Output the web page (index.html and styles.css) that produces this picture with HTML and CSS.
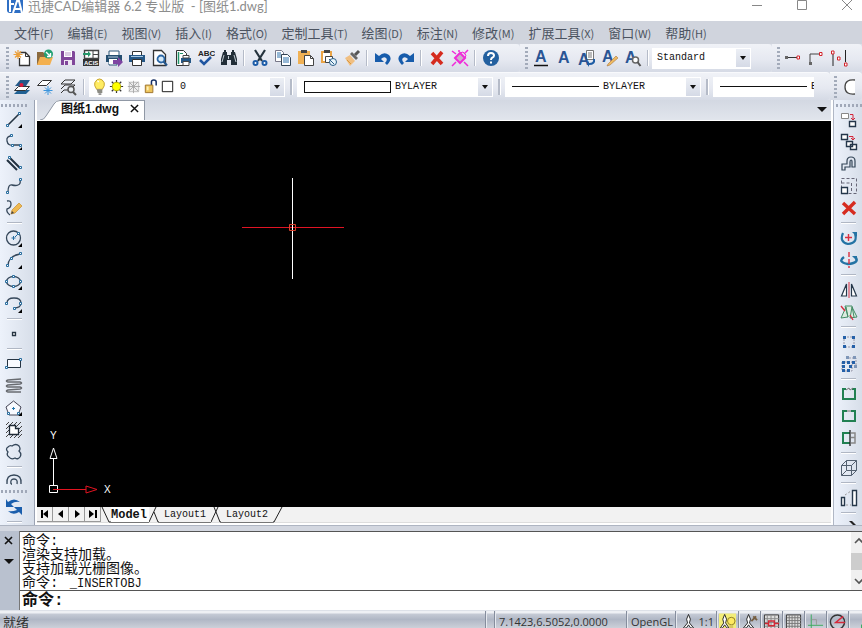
FILE: index.html
```
<!DOCTYPE html>
<html lang="zh-CN">
<head>
<meta charset="utf-8">
<title>迅捷CAD编辑器 6.2 专业版 - [图纸1.dwg]</title>
<link rel="stylesheet" href="styles.css">
</head>
<body>
<header class="titlebar">
  <svg class="logo" viewBox="0 0 18 14"><path d="M1 0h16v10q0 3-3 3H4q-3 0-3-3z" fill="#2f6fc4"/><path d="M4 0v12M4 4h4" stroke="#fff" stroke-width="2"/><path d="M7 13L11 1h2l3 12M9 9h6" stroke="#fff" stroke-width="2" fill="none"/></svg>
  <h1>迅捷CAD编辑器 6.2 专业版 &nbsp;- [图纸1.dwg]</h1>
  <div class="window-buttons">
    <button aria-label="最小化"><svg viewBox="0 0 12 12"><path d="M1 5.500h10"/></svg></button>
    <button aria-label="最大化"><svg viewBox="0 0 12 12"><path d="M1.500 .5h9v9h-9z"/></svg></button>
    <button aria-label="关闭"><svg viewBox="0 0 12 12"><path d="M1 0l10 10M11 0L1 10"/></svg></button>
  </div>
</header>

<nav class="menubar">
  <button>文件<small>(F)</small></button><button>编辑<small>(E)</small></button><button>视图<small>(V)</small></button><button>插入<small>(I)</small></button><button>格式<small>(O)</small></button><button>定制工具<small>(T)</small></button><button>绘图<small>(D)</small></button><button>标注<small>(N)</small></button><button>修改<small>(M)</small></button><button>扩展工具<small>(X)</small></button><button>窗口<small>(W)</small></button><button>帮助<small>(H)</small></button>
</nav>

<div class="toolrow">
  <section class="toolbar standard">
    <i class="grip"></i>
    <button aria-label="新建"><svg viewBox="0 0 18 18"><path d="M6.500 3.500h6l4 4v9h-10V9" fill="#fff" stroke="#333" stroke-width="1.300"/><path d="M12.500 3.500v4h4" fill="none" stroke="#333"/><path d="M5 1v9M.5 5.500h9M2 2.500l6 6M8 2.500l-6 6" stroke="#eba03c" stroke-width="1.200"/></svg></button>
    <button aria-label="打开"><svg viewBox="0 0 18 18"><path d="M1 3h6l2 2h5v11H1z" fill="#8b6a3e"/><path d="M1 16L4 8h13l-3 8z" fill="#f3b04f"/><circle cx="12.500" cy="5" r="4.500" fill="#22a072"/><path d="M10 3l4 4M14.500 4v3.500H11" stroke="#fff" stroke-width="1.400" fill="none"/></svg></button>
    <button aria-label="保存"><svg viewBox="0 0 18 18"><path d="M2 2h13l1 1v13H2z" fill="#80479a"/><path d="M5 2h8v6H5z" fill="#fff"/><path d="M6 4h6M6 6h6" stroke="#b79ac5"/><path d="M5 11h8v5H5z" fill="#efe7f3"/><path d="M6 12h3v4H6z" fill="#80479a"/></svg></button>
    <button aria-label="ACIS输出"><svg viewBox="0 0 18 18"><path d="M2.500 1.500h14v8h-14z" fill="#fff" stroke="#444" stroke-width="1.400"/><path d="M11 2v7M11 5.500h5" stroke="#444"/><path d="M1 4h5V2l3 3-3 3V6H1z" fill="#239568"/><path d="M1 10h16v7H1z" fill="#333"/><text x="2" y="16" class="acis">ACIS</text></svg></button>
    <button aria-label="批打印"><svg viewBox="0 0 18 18"><path d="M4 2h10v5H4zM4 11h8v5H4z" fill="#fff" stroke="#2c5779"/><path d="M1 6h16v7H1z" fill="#244e70"/><path d="M4 10h8v5H4z" fill="#fff"/><path d="M3 8h10" stroke="#b5cce0"/><path d="M8 11h5V8l5 5-5 5v-3H8z" fill="#7e45a2"/></svg></button>
    <button aria-label="打印"><svg viewBox="0 0 18 18"><path d="M4.500 2.500h9v4h-9z" fill="#fff" stroke="#333"/><path d="M1 6h16v7H1z" fill="#245786"/><path d="M3 7.500h12" stroke="#a8c8e4"/><path d="M4.500 10.500h9v6h-9z" fill="#fff" stroke="#333"/></svg></button>
    <button aria-label="打印预览"><svg viewBox="0 0 18 18"><path d="M2.500 1.500h8l4 4v11h-12z" fill="#fff" stroke="#333" stroke-width="1.300"/><circle cx="10" cy="10" r="3.500" fill="#d5e9f8" stroke="#2a66a5" stroke-width="1.800"/><path d="M12.500 12.500l3.500 4" stroke="#25568b" stroke-width="2"/></svg></button>
    <button aria-label="页面设置"><svg viewBox="0 0 18 18"><path d="M2.500 1.500h7l3 3v12h-10z" fill="#fff" stroke="#333"/><path d="M4.500 3v12" stroke="#219469" stroke-width="1.500"/><path d="M6 4.500h3" stroke="#219469"/><path d="M7 9h10v5H7z" fill="#245786"/><path d="M9 6.500h6V9H9zM9 12.500h6v4H9z" fill="#fff" stroke="#444"/></svg></button>
    <button aria-label="拼写检查"><svg viewBox="0 0 18 18"><text x="1" y="7" class="abc">ABC</text><path d="M3 11l4 4 7-7" fill="none" stroke="#2055a0" stroke-width="2.500"/></svg></button>
    <button aria-label="查找"><svg viewBox="0 0 18 18"><path d="M3 3h4v3h4V3h4l2 7v6h-6v-5H7v5H1v-6z" fill="#222e38"/><path d="M4 1h2v2H4zM12 1h2v2h-2z" fill="#222e38"/><path d="M4 6l-2 7M14 6l2 7M8.500 7v3" stroke="#c1cbd3"/></svg></button>
    <i class="sep"></i>
    <button aria-label="剪切"><svg viewBox="0 0 18 18"><path d="M4 1l7 11M14 1L7 12" stroke="#26343e" stroke-width="2.200"/><g fill="#fff" stroke="#1e5da8" stroke-width="2"><circle cx="4.500" cy="14" r="2"/><circle cx="13.500" cy="14" r="2"/></g></svg></button>
    <button aria-label="复制"><svg viewBox="0 0 18 18"><path d="M1.500 1.500h6l2 2v9h-8z" fill="#fff" stroke="#778"/><path d="M3 4h4M3 6h4M3 8h4" stroke="#2f72ad"/><path d="M7.500 5.500h6l3 3v8h-9z" fill="#fff" stroke="#345"/><path d="M9 9h6M9 11h6M9 13h6" stroke="#2f72ad"/></svg></button>
    <button aria-label="粘贴"><svg viewBox="0 0 18 18"><path d="M1 2h12v13H1z" fill="#f0b154"/><path d="M4 1h6v3H4z" fill="#444"/><path d="M7.500 6.500h6l3 3v7h-9z" fill="#fff" stroke="#444"/><path d="M13.500 6.500v3h3" fill="none" stroke="#444"/></svg></button>
    <button aria-label="选择性粘贴"><svg viewBox="0 0 18 18"><path d="M2 3h9v10H2z" fill="#fff" stroke="#eaa446" stroke-width="2"/><path d="M4 1h6v3H4z" fill="#444"/><path d="M5.500 7.500h7v6h-7z" fill="#fff" stroke="#444"/><circle cx="13" cy="13" r="3.500" fill="#e8f4fb" stroke="#285e89"/><path d="M9 10l5 5" stroke="#285e89"/></svg></button>
    <button aria-label="格式刷"><svg viewBox="0 0 18 18"><path d="M2 9l5-3 5 6-5 5z" fill="#f0bf82"/><path d="M7 5l2-2 6 6-2 2z" fill="#666"/><path d="M12 6l4-4" stroke="#555" stroke-width="3"/><path d="M4 11l4 4" stroke="#d9983f"/></svg></button>
    <i class="sep"></i>
    <button aria-label="撤销"><svg viewBox="0 0 18 18"><path d="M1 4v9h9l-3-3q3-3 5-1 2 2-1 5l2 2q6-6 2-10-5-4-10 1z" fill="#175cab"/></svg></button>
    <button aria-label="重做"><svg viewBox="0 0 18 18"><path d="M17 4v9H8l3-3Q8 7 6 9q-2 2 1 5l-2 2Q-1 10 3 6q5-4 10 1z" fill="#175cab"/></svg></button>
    <i class="sep"></i>
    <button aria-label="删除"><svg viewBox="0 0 18 18"><path d="M4 4l10 11M14 3L4 15" stroke="#d52b1e" stroke-width="3.600"/></svg></button>
    <button aria-label="清理"><svg viewBox="0 0 18 18"><path d="M1 2l4 3M17 1l-4 4M1 17l4-4M17 17l-4-4M8 1v2" stroke="#f02bd8" stroke-width="1.500"/><path d="M4 9l5-5 5 5-5 5z" fill="#cdaeca" stroke="#f02bd8" stroke-width="2"/><path d="M9 4l3-1 3 3-1 3" fill="none" stroke="#f02bd8"/></svg></button>
    <i class="sep"></i>
    <button aria-label="帮助"><svg viewBox="0 0 18 18"><circle cx="9" cy="9" r="8" fill="#23609f"/><path d="M6 7q0-3 3-3t3 2.500q0 1.500-1.500 2T9 11" fill="none" stroke="#fff" stroke-width="2"/><path d="M8 12.500h2v2H8z" fill="#fff"/></svg></button>
  </section>
  <section class="toolbar text-style">
    <i class="grip"></i>
    <button aria-label="多行文字"><svg viewBox="0 0 18 18"><text x="3" y="13" class="glyph">A</text><path d="M2 16.500h14" stroke="#111" stroke-width="1.500"/></svg></button>
    <button aria-label="单行文字"><svg viewBox="0 0 18 18"><text x="3" y="14" class="glyph">A</text></svg></button>
    <button aria-label="编辑文字"><svg viewBox="0 0 18 18"><path d="M8.500 1.500h7v9h-7z" fill="#fff" stroke="#777"/><path d="M10 4h4M10 6h4M10 8h4" stroke="#777"/><text x="0" y="16" class="glyph">A</text><path d="M15 10q1 4-4 4v-2l-2 3 2 3v-2q7 0 6-6z" fill="#1d5ca4"/></svg></button>
    <button aria-label="文字格式"><svg viewBox="0 0 18 18"><text x="1" y="13" class="glyph">A</text><path d="M7 15l8-8 2 2-8 7-3 1z" fill="#efba62" stroke="#a9793d" stroke-width=".6"/></svg></button>
    <button aria-label="查找文字"><svg viewBox="0 0 18 18"><text x="1" y="14" class="glyph">A</text><circle cx="11.500" cy="11" r="3" fill="#fff" stroke="#666" stroke-width="1.500"/><path d="M13.500 13l3 4" stroke="#555" stroke-width="2"/></svg></button>
    <i class="sep"></i>
    <div class="combo style-combo"><select aria-label="文字样式"><option>Standard</option></select><i class="arrow"></i></div>
  </section>
  <section class="toolbar dimension">
    <i class="grip"></i>
    <button aria-label="线性"><svg viewBox="0 0 18 18"><path d="M3 8.500h12" stroke="#333"/><path d="M1 7h3v3H1z" fill="#666"/><path d="M13 7h2.500v3H13z" fill="#fff" stroke="#d2232a"/></svg></button>
    <button aria-label="引线"><svg viewBox="0 0 18 18"><path d="M3 13V5h9" fill="none" stroke="#444"/><path d="M2 13h3v3H2z" fill="#666"/><path d="M12.500 3.500H15v3h-2.500z" fill="#fff" stroke="#d2232a"/></svg></button>
    <button aria-label="间距"><svg viewBox="0 0 18 18"><path d="M3 5v12M15.500 1v12" stroke="#222"/><path d="M1.500 2H4v3H1.500zM7.500 8H10v3H7.500zM14.500 14H17v3h-2.500z" fill="#fff" stroke="#d2232a"/></svg></button>
  </section>
</div>

<div class="toolrow second">
  <section class="toolbar layer">
    <i class="grip"></i>
    <button aria-label="图层管理"><svg viewBox="0 0 18 18"><path d="M1 16l4-4h12l-4 4z" fill="#1f6093"/><path d="M1.500 12.500l4-4h11l-4 4z" fill="#fff" stroke="#333"/><path d="M2 8l5-6h10l-4 6z" fill="#245a89"/><circle cx="8.500" cy="7" r="2" fill="#df1b3f"/></svg></button>
    <button aria-label="图层冻结"><svg viewBox="0 0 18 18"><path d="M1.500 7.500l5-5h9l-5 5z" fill="#fff" stroke="#333"/><path d="M12 8v9M7.500 12.500h9M9 9.500l6 6M15 9.500l-6 6" stroke="#3a94dc"/></svg></button>
    <button aria-label="图层查看"><svg viewBox="0 0 18 18"><path d="M2 6l4-4h10l-4 4zM2 11l4-4h10l-3 3M2 15l3-3h4" fill="none" stroke="#333"/><circle cx="12" cy="11.500" r="3" fill="#e9edf2" stroke="#555" stroke-width="1.500"/><path d="M14 14l3 3" stroke="#555" stroke-width="2"/></svg></button>
    <i class="sep loose"></i>
    <div class="combo">
      <svg viewBox="0 0 18 18"><path d="M6 12q-3-4-2-7 2-4 5-4t5 4q1 3-2 7z" fill="#ffec62" stroke="#c4a02b"/><path d="M6 12h6v4H7z" fill="#8c8c84"/><path d="M8 17h3" stroke="#333"/><path d="M7 4l1-1" stroke="#fff" stroke-width="2"/></svg>
      <svg viewBox="0 0 18 18"><path d="M9 2v14M2 9h14M4 4l10 10M14 4L4 14" stroke="#333" stroke-width="1.300"/><circle cx="9" cy="9" r="4.500" fill="#ff0" stroke="#b5ac00"/></svg>
      <svg viewBox="0 0 18 18"><path d="M4.500 4.500h10v10h-10z" fill="#eee" stroke="#bbb"/><path d="M9 3v13M3 9h13M4 4l10 10M14 4L4 14" stroke="#aaa"/></svg>
      <svg viewBox="0 0 18 18"><path d="M10 8V4q0-2 2.500-2T15 4v4" fill="none" stroke="#162f64" stroke-width="1.600"/><path d="M3.500 7.500h8v8h-8z" fill="#edc55c" stroke="#9d722c"/><path d="M6 9v4" stroke="#fff0b9" stroke-width="2"/></svg>
      <svg viewBox="0 0 18 18"><path d="M3.500 3.500h11v11h-11z" fill="#fff" stroke="#111"/></svg>
      <select aria-label="图层"><option>0</option></select><i class="arrow"></i>
    </div>
    <i class="sep wide"></i>
    <div class="combo"><i class="swatch"></i><select aria-label="颜色"><option>BYLAYER</option></select><i class="arrow"></i></div>
    <i class="sep wide"></i>
    <div class="combo"><i class="line"></i><select aria-label="线型"><option>BYLAYER</option></select><i class="arrow"></i></div>
    <i class="sep wide"></i>
    <div class="combo cut"><i class="line"></i><select aria-label="线宽"><option>BYLAYER</option></select></div>
  </section>
  <section class="toolbar arcs">
    <i class="grip"></i>
    <button aria-label="圆弧"><svg viewBox="0 0 18 18"><path d="M14 2q-10-1-10 7t10 7z" fill="#fff"/><path d="M14 2q-10-1-10 7t10 7" fill="none" stroke="#444" stroke-width="1.300"/></svg></button>
  </section>
</div>

<main>
  <aside class="side left">
    <i class="hgrip"></i>
    <button aria-label="直线"><svg viewBox="0 0 18 18"><path d="M3 14L14 3" stroke="#263442" stroke-width="1.600"/><path d="M1.500 13.500h2v2h-2zM13.500 1.500h2v2h-2z" class="node"/><path d="M17 13v4h-4z"/></svg></button>
    <button aria-label="多段线"><svg viewBox="0 0 18 18"><path d="M7 3Q1 3 2 8t6 4h7" class="curve"/><path d="M5.500 1.500h2v2h-2zM6.500 11.500h2v2h-2zM14.500 11.500h2v2h-2z" class="node"/><path d="M17 14v3h-3z"/></svg></button>
    <button aria-label="双线"><svg viewBox="0 0 18 18"><path d="M2 5l10 10M5 3l10 10" stroke="#223140" stroke-width="2"/><path d="M3.500 1.500h2v2h-2zM14.500 11.500h2v2h-2z" class="node"/></svg></button>
    <button aria-label="样条曲线"><svg viewBox="0 0 18 18"><path d="M3 15q0-8 4-7t6 0q3-1 2-5" class="curve"/><path d="M1.500 14.500h2v2h-2zM14.500 1.500h2v2h-2z" class="node"/></svg></button>
    <button aria-label="手画线"><svg viewBox="0 0 18 18"><path d="M2 2q4-1 4 3T2 10q-1 3 3 6" class="curve"/><path d="M6 15l1-4 7-7 3 3-7 7z" fill="#efb951" stroke="#c68c2e" stroke-width=".7"/><path d="M6 15l1-3 2 2z" fill="#444"/></svg></button>
    <i class="hsep"></i>
    <button aria-label="圆"><svg viewBox="0 0 18 18"><circle cx="8.500" cy="9" r="7" class="curve"/><path d="M8.500 7v4M6.500 9h4M10 8l3-3" stroke="#266da0"/><path d="M12.500 3.500h2v2h-2z" class="node"/><path d="M17 14v4h-4z"/></svg></button>
    <button aria-label="圆弧"><svg viewBox="0 0 18 18"><path d="M3 15Q3 5 15 3" class="curve"/><path d="M1.500 13.500h2v2h-2zM5.500 6.500h2v2h-2zM14.500 1.500h2v2h-2z" class="node"/><path d="M17 14v4h-4z"/></svg></button>
    <button aria-label="椭圆"><svg viewBox="0 0 18 18"><ellipse cx="8.500" cy="8.500" rx="7" ry="5" class="curve"/><path d="M.5 7.500h2v2h-2zM14.500 7.500h2v2h-2zM7.500 2.500h2v2h-2zM7.500 12.500h2v2h-2z" class="node"/><path d="M17 13v4h-4z"/></svg></button>
    <button aria-label="椭圆弧"><svg viewBox="0 0 18 18"><path d="M2 8q0-5 7-5t7 5-7 5" class="curve"/><path d="M.5 7.500h2v2h-2zM14.500 7.500h2v2h-2zM8.500 12.500h2v2h-2z" class="node"/><path d="M17 14v4h-4z"/></svg></button>
    <i class="hsep"></i>
    <button aria-label="点"><svg viewBox="0 0 18 18"><path d="M7.500 7.500h3v3h-3z" fill="#fff" stroke="#263442" stroke-width="1.300"/></svg></button>
    <i class="hsep"></i>
    <button aria-label="矩形"><svg viewBox="0 0 18 18"><path d="M2.500 4.500h13v8h-13z" fill="#f8faff" stroke="#263442"/><path d="M.5 11.500h2v2h-2zM14.500 3.500h2v2h-2z" class="node"/></svg></button>
    <button aria-label="螺旋"><svg viewBox="0 0 18 18"><path d="M16 2L3 3q-3 1 0 2l12 0q3 1 0 2L3 8q-3 1 0 2h12q3 1 0 2L3 13q-3 1 0 2h13" fill="none" stroke="#686b70" stroke-width="1.700"/></svg></button>
    <button aria-label="多边形"><svg viewBox="0 0 18 18"><path d="M8.500 2L16 8l-3 8H4L1 8z" fill="#f8faff" stroke="#445"/><path d="M7 9.500h3M8.500 8v3" stroke="#2677ad"/><path d="M2.500 13.500h2v2h-2zM12.500 13.500h2v2h-2z" class="node"/><path d="M17 13v4h-4z"/></svg></button>
    <button aria-label="填充"><svg viewBox="0 0 18 18"><path d="M1 4l3-3M1 8l7-7M1 12L12 1M1 16L16 1M5 17L17 5M9 17l8-8M13 17l4-4" stroke="#444"/><path d="M4.500 4.500h6v3h3v6h-9z" fill="#fff" stroke="#202b37" stroke-width="1.300"/></svg></button>
    <button aria-label="修订云线"><svg viewBox="0 0 18 18"><path d="M3 9Q0 6 3 4q2-2 4-1 4-3 7 0 2 3 0 5 3 3 1 6-2 3-5 1-4 2-6-1-3-2-1-5z" class="curve"/></svg></button>
    <i class="hsep"></i>
    <button class="clip" aria-label="圆环"><svg viewBox="0 0 18 18"><path d="M2 13q-1-9 7-9t7 9M6 13q-1-5 3-5t3 5M6 13h1" class="curve"/></svg></button>
    <i class="hgrip short"></i>
    <button aria-label="刷新"><svg viewBox="0 0 18 18"><path d="M1 1v8h8L6 6q4-3 9-2Q9-1 3 4zM17 17V9H9l3 3q-5 2-9 1 5 5 11 1z" fill="#1a5eac"/></svg></button>
    <i class="hsep"></i>
  </aside>

  <section class="workspace">
    <div class="doc-tabs">
      <div class="doc-tab"><svg class="slope" viewBox="0 0 20 20" preserveAspectRatio="none"><path d="M0 20Q4 20 6 16L14 4Q16 0 20 0V20z" fill="#fff"/><path d="M0 20Q4 20 6 16L14 4Q16 .5 20 .5" fill="none" stroke="#9098a5"/></svg><span>图纸1.dwg</span><button aria-label="关闭图纸"><svg viewBox="0 0 10 10"><path d="M1 1l8 8M9 1L1 9" stroke="#111" stroke-width="1.600"/></svg></button></div>
      <button class="tab-list" aria-label="图纸列表"><i class="tri"></i></button>
    </div>
    <div class="drawing">
      <svg class="crosshair" viewBox="0 0 103 103"><path d="M0 50h102v1H0z" fill="#e01424"/><path d="M50.500 1v101" stroke="#fff"/><path d="M47.500 47.500h6v6h-6z" fill="none" stroke="#d8402c"/></svg>
      <svg class="ucs" viewBox="0 0 70 68"><path d="M8.500 54V27" stroke="#fff"/><path d="M8.500 17L5 27.500h7zM4.500 54.500h8v7h-8z" fill="none" stroke="#fff"/><path d="M8 58.500h33M41 55l11 3.500L41 62z" fill="none" stroke="#e31420"/><text x="5" y="8">Y</text><text x="59" y="62">X</text></svg>
    </div>
    <div class="layouts">
      <button class="nav" aria-label="第一个"><svg viewBox="0 0 16 14"><path d="M4 3h2v8H4zM11 3v8L6 7z"/></svg></button><button class="nav" aria-label="上一个"><svg viewBox="0 0 16 14"><path d="M10 3v8L5 7z"/></svg></button><button class="nav" aria-label="下一个"><svg viewBox="0 0 16 14"><path d="M6 3v8l5-4z"/></svg></button><button class="nav" aria-label="最后一个"><svg viewBox="0 0 16 14"><path d="M4 3v8l5-4zM10 3h2v8h-2z"/></svg></button>
      <svg class="slant" viewBox="0 0 10 16"><path d="M1 0l7 15h2"/></svg><button class="layout current">Model</button><svg class="slant" viewBox="0 0 10 16"><path d="M0 15L7 0M5 5l4 10h1"/></svg><button class="layout">Layout1</button><svg class="slant" viewBox="0 0 10 16"><path d="M0 15L7 0M3 0l6 15h1"/></svg><button class="layout">Layout2</button><svg class="slant" viewBox="0 0 10 16"><path d="M0 15h1L9 0"/></svg>
    </div>
  </section>

  <aside class="side right">
    <i class="hgrip"></i>
    <button aria-label="复制"><svg viewBox="0 0 18 18"><path d="M1.500 2.500h7v5h-7z" fill="#fff" stroke="#888"/><path d="M9.500 10.500h6v5h-6z" fill="#fff" stroke="#24364a" stroke-width="1.400"/><path d="M10 3.500h3V9M11 7l2 2 2-2" fill="none" stroke="#d3263a"/></svg></button>
    <button aria-label="多重复制"><svg viewBox="0 0 18 18"><path d="M1.500 1.500h6v5h-6zM6.500 8.500h6v5h-6zM10.500 11.500h6v5h-6z" fill="#fff" stroke="#24364a" stroke-width="1.400"/><path d="M9 3.500h4V7M11 5l2 2 2-2" fill="none" stroke="#d3263a"/></svg></button>
    <button aria-label="偏移"><svg viewBox="0 0 18 18"><path d="M2 15V9h5V6q0-4 4-4t4 4v6h-3V7q0-2-1-2t-1 2v5H5v3z" fill="none" stroke="#334557" stroke-width="1.200"/></svg></button>
    <button aria-label="缩放"><svg viewBox="0 0 18 18"><path d="M1.500 1.500h15v15h-15zM1.500 6h10v10" fill="none" stroke="#667" stroke-dasharray="3 2"/><path d="M1.500 10.500h6v6h-6z" fill="#fff" stroke="#24364a" stroke-width="1.300"/></svg></button>
    <button aria-label="删除"><svg viewBox="0 0 18 18"><path d="M3 4l12 11M15 3L3 15" stroke="#d62c20" stroke-width="3.400"/></svg></button>
    <i class="hsep"></i>
    <button aria-label="旋转"><svg viewBox="0 0 18 18"><path d="M3 4q-4 9 5 11 10-1 7-10" fill="none" stroke="#2473a4" stroke-width="2.200"/><path d="M12 3h5v5z" fill="#2473a4"/><path d="M8.500 5v7M5 8.500h7" stroke="#db3040" stroke-width="1.400"/></svg></button>
    <button aria-label="三维旋转"><svg viewBox="0 0 18 18"><path d="M4 6q-7 5 4 7 11-1 8-6" fill="none" stroke="#2473a4" stroke-width="2.500"/><path d="M12 5h5v5z" fill="#2473a4"/><path d="M9 1v16" stroke="#db3040" stroke-width="1.400" stroke-dasharray="5 2"/></svg></button>
    <i class="hsep"></i>
    <button aria-label="镜像"><svg viewBox="0 0 18 18"><path d="M6.500 3v12h-5zM11.500 3v12h5z" fill="#fff" stroke="#26384a" stroke-width="1.200"/><path d="M9 1v16" stroke="#d63042"/></svg></button>
    <button aria-label="三维镜像"><svg viewBox="0 0 18 18"><path d="M6 4l2 10-7 1zM12 4l5 10-7 1zM8 14L5 3h7l2 11" fill="#dbece0" stroke="#448c66"/><path d="M1 3l4 5M10 12l3 5" stroke="#d63042" stroke-width="1.400"/></svg></button>
    <i class="hsep"></i>
    <button aria-label="阵列"><svg viewBox="0 0 18 18"><path d="M4 4h10v10H4z" fill="none" stroke="#99a" stroke-dasharray="2 1"/><path d="M3 3h3v3H3zM12 3h3v3h-3zM3 12h3v3H3zM12 12h3v3h-3z" fill="#2460a8"/></svg></button>
    <button aria-label="三维阵列"><svg viewBox="0 0 18 18"><path d="M6 3h10v10M2 7h10v9H2z" fill="none" stroke="#99a" stroke-dasharray="2 1"/><path d="M2 6h3v3H2zM7 6h3v3H7zM12 6h3v3h-3zM2 14h3v3H2zM7 14h3v3H7zM2 10h3v3H2zM9 10h3v3H9z" fill="#2460a8"/><path d="M6 1h3v3H6zM13 1h3v3h-3zM14 10h3v3h-3z" fill="#7e96b8"/></svg></button>
    <i class="hsep"></i>
    <button aria-label="打断"><svg viewBox="0 0 18 18"><path d="M6 4H3v10h12V4h-3" class="green"/><path d="M6 5l3-2 1 2 3-2" fill="none" stroke="#777"/></svg></button>
    <button aria-label="合并"><svg viewBox="0 0 18 18"><path d="M7 4H3v10h12V4h-4" class="green"/><path d="M7 4h4" stroke="#999" stroke-width="1.500"/></svg></button>
    <button aria-label="修剪"><svg viewBox="0 0 18 18"><path d="M10 4H3v10h7" class="green"/><path d="M11 4h4v10h-4M11 8.500h4" fill="none" stroke="#888" stroke-width="1.500"/><path d="M10 1v16" stroke="#222" stroke-width="1.300"/></svg></button>
    <i class="hsep"></i>
    <button aria-label="拉伸实体"><svg viewBox="0 0 18 18"><path d="M1.500 6.500l5-5h10v10l-5 5h-10zM1.500 6.500h10v10M11.500 6.500l5-5M6.500 1.500v10h10M6.500 11.500l-5 5" fill="none" stroke="#536070"/></svg></button>
    <i class="hsep"></i>
    <button aria-label="对齐"><svg viewBox="0 0 18 18"><path d="M1.500 8.500h3v8h-3zM12.500 1.500h4v15h-4z" fill="#fff" stroke="#26384a" stroke-width="1.400"/><path d="M5 6l6-4M6 16h5" stroke="#999" stroke-dasharray="2 2"/></svg></button>
    <i class="hsep"></i>
    <button class="clip last" aria-label="更多"><svg viewBox="0 0 18 18"><path d="M9 4h3l4 4h-3z" fill="#222"/></svg></button>
  </aside>
</main>

<section class="command">
  <div class="command-tools">
    <button aria-label="关闭命令行"><svg viewBox="0 0 10 10"><path d="M1 1l7 7M8 1L1 8" stroke="#111" stroke-width="1.600"/></svg></button>
    <button aria-label="命令行选项"><i class="tri"></i></button>
  </div>
  <div class="console">
    <div class="history">
      <div class="log" role="log"><p>命令:</p><p>渲染支持加载。</p><p>支持加载光栅图像。</p><p>命令: <span class="echo">_INSERTOBJ</span></p></div>
      <div class="scroll"><svg viewBox="0 0 11 11"><path d="M4 8l4-4 4 4"/></svg><i class="thumb"></i><svg viewBox="0 0 11 11"><path d="M4 3l4 4 4-4"/></svg></div>
    </div>
    <div class="prompt"><label for="cmd">命令:</label><input id="cmd" type="text"></div>
  </div>
</section>

<footer class="status">
  <span class="ready">就绪</span>
  <span class="pane gap"></span>
  <span class="pane coords">7.1423,6.5052,0.0000</span>
  <span class="pane renderer">OpenGL</span>
  <button class="pane scale"><svg viewBox="0 0 18 18"><path d="M9 1l2 5-1 4 5 6-4-1-2-3-2 3-4 1 5-6-1-4z" fill="#fff" stroke="#222"/></svg>1:1</button>
  <button class="pane" aria-label="注释可见性"><svg viewBox="0 0 18 18"><path d="M0 0h18v18H0z" fill="#f2ed78"/><path d="M6 1l2 5-1 4 4 6-3-1-2-3-2 3-3 1 4-6-1-4z" fill="#fff" stroke="#222"/><circle cx="13" cy="8" r="4" fill="#ffe960" stroke="#8c7b21"/><path d="M11 12h4v4h-4z" fill="#d8c560"/></svg></button>
  <button class="pane" aria-label="自动注释"><svg viewBox="0 0 18 18"><path d="M8 1l2 5-1 4 5 6-4-1-2-3-2 3-4 1 5-6-1-4z" fill="#fff" stroke="#222"/><path d="M11 8l5-5M13 3l4 4" stroke="#765f42" stroke-width="2"/></svg></button>
  <button class="pane" aria-label="捕捉"><svg viewBox="0 0 18 18"><path d="M1.500 1.500h15v15h-15z" fill="#ddd" stroke="#333"/><path d="M4.500 2v15M8.500 2v15M12.500 2v15M2 5.500h15M2 9.500h15M2 13.500h15" stroke="#888"/><path d="M6 8h6v5H6zM2 10.500h4M12 10.500h5" fill="none" stroke="#d22936" stroke-width="1.500"/></svg></button>
  <button class="pane" aria-label="栅格"><svg viewBox="0 0 18 18"><path d="M1.500 1.500h15v15h-15z" fill="#ddd" stroke="#333"/><path d="M4.500 2v15M7.500 2v15M10.500 2v15M13.500 2v15M2 4.500h15M2 7.500h15M2 10.500h15M2 13.500h15" stroke="#777"/></svg></button>
  <button class="pane" aria-label="正交"><svg viewBox="0 0 18 18"><path d="M4.500 1v17M1 12.500h16" stroke="#39a95c"/><path d="M5 6.500h5V12" fill="none" stroke="#999"/></svg></button>
  <button class="pane" aria-label="极轴"><svg viewBox="0 0 18 18"><circle cx="9" cy="9" r="7.500" fill="none" stroke="#333" stroke-width="1.500"/><path d="M15 3L7 9.500h10" fill="none" stroke="#d5293b" stroke-width="1.500"/></svg></button>
  <button class="pane" aria-label="对象捕捉"><svg viewBox="0 0 18 18"><path d="M9 12h8v5H9z" fill="none" stroke="#39a95c"/></svg></button>
</footer>
</body>
</html>
```
FILE: styles.css
```
* { box-sizing: border-box; }
body {
  margin: 0;
  height: 100vh;
  display: flex;
  flex-direction: column;
  overflow: hidden;
  background: #d9dde6;
  font-family: "Open Sans", "Noto Sans CJK SC", sans-serif;
  font-size: 13px;
  color: #333;
}
button, select, input {
  font: inherit;
  color: inherit;
  border: 0;
  padding: 0;
  margin: 0;
  background: none;
  border-radius: 0;
}
button { flex: none; display: flex; align-items: center; justify-content: center; }
svg { display: block; flex: none; overflow: hidden; }
i { display: block; flex: none; }

.titlebar { flex: none; height: 21px; display: flex; align-items: flex-start; background: #fff; overflow: hidden; padding-left: 6px; }
.logo { width: 18px; height: 14px; margin-right: 4px; }
.titlebar h1 { flex: 1; margin: 0; font: 13px/13px Lato, "Noto Sans CJK SC", sans-serif; color: #8d8d8d; white-space: nowrap; }
.window-buttons { display: flex; }
.window-buttons button { width: 45px; height: 12px; }
.window-buttons button:last-child { margin-right: -7px; }
.window-buttons svg { width: 12px; height: 12px; fill: none; stroke: #888; }

.menubar { flex: none; height: 23px; display: flex; align-items: center; gap: 14px; padding-left: 14px; background: #d0d4dd; color: #4b5360; white-space: nowrap; overflow: hidden; }
.menubar button { line-height: 20px; font-family: "Noto Sans CJK SC", sans-serif; }
.menubar small { font-size: 11px; }

.toolrow { flex: none; display: flex; height: 28px; background: #dce0e9; overflow: hidden; }
.toolbar { display: flex; align-items: center; background: linear-gradient(#f0f2f7, #e6e9f1 55%, #d5dae5); border-radius: 0 4px 4px 0; flex: none; }
.toolbar button { width: 23px; height: 26px; }
.toolbar button svg, .side button svg { width: 18px; height: 18px; }
.toolbar .grip { width: 3px; height: 22px; margin: 0 1px 0 6px; background: repeating-linear-gradient(#a3abba 0 2px, transparent 2px 4px); }
.standard { width: 520px; }
.text-style { width: 252px; }
.text-style .grip, .dimension .grip { margin-left: 5px; }
.dimension { flex: 1; }
.sep { width: 2px; height: 16px; margin: 0 3px; background: #b5bbc8; border-right: 1px solid #fff; }
.toolbar svg text { font-family: "Liberation Sans", sans-serif; font-weight: bold; }
.toolbar svg .acis { font-size: 6px; fill: #fff; }
.toolbar svg .abc { font-size: 8px; fill: #222; }
.toolbar svg .glyph { font-size: 16px; fill: #2a5594; }

.combo { display: flex; align-items: center; height: 20px; width: 196px; background: #fff; overflow: hidden; padding: 1px; flex: none; }
.combo select { flex: 1; min-width: 0; appearance: none; color: #111; font: 10px/18px "Liberation Mono", monospace; padding-left: 4px; overflow: hidden; }
.combo svg { width: 17px; height: 17px; }
.combo .arrow { width: 14px; height: 18px; background: linear-gradient(#eceff5, #d5dae6); display: flex; align-items: center; justify-content: center; pointer-events: none; }
.combo .arrow::after { content: ""; border: 3px solid transparent; border-top: 4px solid #111; border-bottom: 0; }
.style-combo { width: 99px; height: 21px; }
.second .toolbar { border-top: 1px solid #f8f9fc; }
.second .sep.loose { margin: 0 4px; }
.second .sep.wide { width: 3px; margin: 0 4px 0 5px; }
.layer { flex: 1; min-width: 0; }
.layer > .combo:first-of-type svg:first-child { margin-left: 1px; }
.swatch { width: 87px; height: 12px; border: 1px solid #111; margin-left: 6px; }
.line { width: 87px; height: 1px; background: #111; margin-left: 6px; }
.combo.cut { width: 101px; }
.combo.cut select { flex: none; width: 46px; }
.arcs { width: 32px; }
.arcs .grip { margin-left: 4px; }

main { flex: 1; min-height: 0; display: flex; background: #dbe0e9; border-bottom: 1px solid #aeb5c2; }
.side { flex: none; display: flex; flex-direction: column; align-items: center; width: 35px; overflow: hidden; background: linear-gradient(90deg, #edf2fb, #d7dee9); border-right: 1px solid #9ba3b3; padding-right: 6px; }
.side button { width: 24px; height: 22px; }
.side.right { width: 29px; padding: 0 0 0 1px; border-left: 1px solid #b0b7c5; border-right: 0; }
.side .clip { height: 17px; align-items: flex-start; overflow: hidden; }
.side .clip.last { height: 10px; }
.hgrip { width: 26px; height: 3px; margin: 4px 0 2px; background: repeating-linear-gradient(90deg, #a0a8b8 0 2px, transparent 2px 4px); }
.hgrip.short { margin: 2px 0 3px; }
.hsep { width: 15px; height: 2px; margin: 3px 0; background: #b0b7c4; border-bottom: 1px solid #fff; }
.curve { fill: none; stroke: #35475a; stroke-width: 1.3; }
.node { fill: #fff; stroke: #276d9f; }
.green { fill: none; stroke: #218052; stroke-width: 2px; }

.workspace { flex: 1; min-width: 0; display: flex; flex-direction: column; border: solid #fff; border-width: 0 2px 2px; }
.doc-tabs { flex: none; height: 21px; display: flex; justify-content: space-between; align-items: flex-end; background: linear-gradient(#d3d8e2, #e1e5ec); border-bottom: 1px solid #fff; }
.doc-tab { display: flex; align-items: center; height: 20px; margin-left: 3px; }
.doc-tab .slope { width: 20px; height: 20px; }
.doc-tab span { height: 20px; background: #fff; border-top: 1px solid #9098a5; padding: 0 6px 0 1px; font: bold 12px/17px "Liberation Sans", "Noto Sans CJK SC", sans-serif; color: #111; }
.doc-tab button { width: 20px; height: 20px; background: #fff; border: solid #9098a5; border-width: 1px 1px 0 0; padding-bottom: 4px; }
.doc-tab button svg { width: 9px; height: 9px; }
.tab-list { width: 18px; height: 21px; }
.tri { border: 5px solid transparent; border-top-color: #111; border-bottom: 0; }
.drawing { position: relative; flex: 1; min-height: 0; background: #000; overflow: hidden; }
.crosshair { position: absolute; left: 205px; top: 56px; width: 103px; height: 103px; }
.ucs { position: absolute; left: 8px; bottom: 8px; width: 70px; height: 68px; font: 10px "Liberation Sans", sans-serif; fill: #fff; }

.layouts { flex: none; display: flex; height: 16px; background: #f2f2f2; border-bottom: 1px solid #ddd; }
.nav { width: 16px; height: 15px; border: solid #999; border-width: 0 1px 1px 0; }
.nav svg { width: 16px; height: 14px; }
.layout { border-bottom: 1px solid #777; font: 10px/14px "Liberation Mono", monospace; color: #111; height: 16px; padding: 0 5px; }
.current { font-size: 12px; font-weight: bold; background: #fff; padding: 0 2px 0 0; }
.slant { width: 10px; height: 16px; fill: none; stroke: #222; }

.command { flex: none; display: flex; height: 84px; border-top: 5px solid #d3d7e0; }
.command-tools { width: 20px; flex: none; background: #b9c1cf; display: flex; flex-direction: column; align-items: center; gap: 2px; border-right: 1px solid #777; padding: 1px 2px 0 0; }
.command-tools button { width: 18px; height: 18px; }
.command-tools svg { width: 10px; height: 10px; }
.console { flex: 1; min-width: 0; border-top: 1px solid #555; background: #fff; display: flex; flex-direction: column; color: #111; font: 14px/14px "Liberation Mono", "Noto Sans CJK SC", monospace; }
.history { display: flex; height: 59px; border-bottom: 1px solid #555; overflow: hidden; }
.log { flex: 1; padding: 2px; }
.log p { margin: 0; height: 14px; white-space: nowrap; }
.echo { font-size: 12px; margin-left: 3px; }
.scroll { width: 11px; flex: none; background: #f0f0f0; display: flex; flex-direction: column; justify-content: space-between; padding: 3px 0; overflow: hidden; }
.scroll svg { width: 11px; height: 11px; fill: none; stroke: #555; stroke-width: 1.6; }
.thumb { height: 17px; background: #cdcdcd; }
.prompt { display: flex; align-items: center; height: 19px; padding-left: 2px; font-size: 16px; font-weight: bold; }
.prompt input { flex: 1; min-width: 0; height: 18px; outline: 0; padding-left: 4px; }

.status { flex: none; height: 18px; display: flex; align-items: flex-start; background: linear-gradient(#eef0f4 0 2px, #c5cad5 3px, #b0b7c5 50%, #ccd0d9); border-top: 1px solid #dde1e8; overflow: hidden; font-size: 11px; line-height: 22px; color: #333; }
.ready { flex: 1; padding-left: 3px; font-size: 13px; }
.pane { height: 24px; border-left: 1px solid #858d9d; box-shadow: inset 1px 0 #e6e9ef; padding: 0 4px; white-space: nowrap; align-items: flex-start; width: 22px; flex: none; }
.status svg { width: 17px; height: 18px; margin-top: 2px; }
.pane.gap { width: 9px; padding: 0; }
.pane.coords { width: 132px; }
.pane.renderer { width: 49px; }
.pane.scale { width: 41px; padding: 0 2px; gap: 2px; justify-content: flex-end; line-height: 22px; }
.pane:last-child { width: 14px; overflow: hidden; justify-content: flex-start; }
```
